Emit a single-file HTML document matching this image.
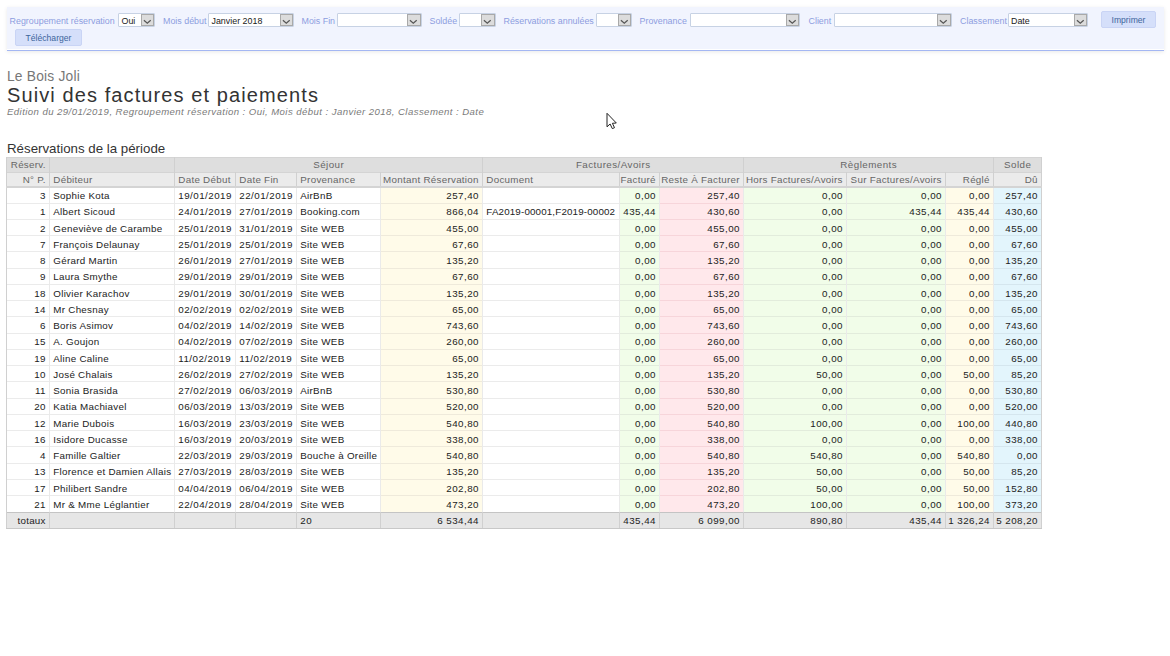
<!DOCTYPE html>
<html><head><meta charset="utf-8"><style>
*{margin:0;padding:0;box-sizing:border-box}
html,body{width:1170px;height:656px;overflow:hidden;background:#fff}
body{font-family:"Liberation Sans",sans-serif;position:relative}
.a{position:absolute}
.t{position:absolute;white-space:nowrap;line-height:1}
.hl{position:absolute;height:1px}
.vl{position:absolute;width:1px}

.panel{left:7px;top:7px;width:1157px;height:44px;background:#f1f4fe;border-bottom:1px solid #a4b7f3;box-shadow:inset 0 -1px 0 #fff,0 1px 4px rgba(0,0,0,.09)}
.lab{top:16.6px;font-size:8.9px;color:#8d9ddf;line-height:9px}
.sel{height:13.5px;background:#fff;border:1px solid #c7d2e4;border-radius:1px}
.st{position:absolute;left:2.5px;top:1.5px;font-size:8.9px;line-height:10px;color:#1a1a1a;white-space:nowrap}
.ab{position:absolute;right:0;top:0;width:13.3px;height:11.5px;background:#dcdcdc;border:1px solid #a9a9a9}
.ab svg{position:absolute;left:0;top:0}
.btn{background:#d5dffa;border:1px solid #c9d4f5;border-radius:2px;font-size:8.6px;line-height:17.4px;text-align:center;color:#3d659c;white-space:nowrap}
</style></head><body>
<div class="a panel"></div>
<div class="t lab" style="left:9.6px">Regroupement réservation</div>
<div class="a sel" style="left:118px;top:13px;width:37px"><span class="st">Oui</span><div class="ab"><svg width="12" height="10" viewBox="0 0 12 10"><path d="M1.9 5.3 L5.3 8.3 L8.7 5.3" fill="none" stroke="#555" stroke-width="1.15"/></svg></div></div>
<div class="t lab" style="left:163px">Mois début</div>
<div class="a sel" style="left:208px;top:13px;width:86px"><span class="st">Janvier 2018</span><div class="ab"><svg width="12" height="10" viewBox="0 0 12 10"><path d="M1.9 5.3 L5.3 8.3 L8.7 5.3" fill="none" stroke="#555" stroke-width="1.15"/></svg></div></div>
<div class="t lab" style="left:301.5px">Mois Fin</div>
<div class="a sel" style="left:336.5px;top:13px;width:85.0px"><span class="st"></span><div class="ab"><svg width="12" height="10" viewBox="0 0 12 10"><path d="M1.9 5.3 L5.3 8.3 L8.7 5.3" fill="none" stroke="#555" stroke-width="1.15"/></svg></div></div>
<div class="t lab" style="left:429.5px">Soldée</div>
<div class="a sel" style="left:459px;top:13px;width:36.5px"><span class="st"></span><div class="ab"><svg width="12" height="10" viewBox="0 0 12 10"><path d="M1.9 5.3 L5.3 8.3 L8.7 5.3" fill="none" stroke="#555" stroke-width="1.15"/></svg></div></div>
<div class="t lab" style="left:503.5px">Réservations annulées</div>
<div class="a sel" style="left:595.5px;top:13px;width:36.5px"><span class="st"></span><div class="ab"><svg width="12" height="10" viewBox="0 0 12 10"><path d="M1.9 5.3 L5.3 8.3 L8.7 5.3" fill="none" stroke="#555" stroke-width="1.15"/></svg></div></div>
<div class="t lab" style="left:639.5px">Provenance</div>
<div class="a sel" style="left:689.5px;top:13px;width:110.5px"><span class="st"></span><div class="ab"><svg width="12" height="10" viewBox="0 0 12 10"><path d="M1.9 5.3 L5.3 8.3 L8.7 5.3" fill="none" stroke="#555" stroke-width="1.15"/></svg></div></div>
<div class="t lab" style="left:808.5px">Client</div>
<div class="a sel" style="left:833.5px;top:13px;width:118.0px"><span class="st"></span><div class="ab"><svg width="12" height="10" viewBox="0 0 12 10"><path d="M1.9 5.3 L5.3 8.3 L8.7 5.3" fill="none" stroke="#555" stroke-width="1.15"/></svg></div></div>
<div class="t lab" style="left:960px">Classement</div>
<div class="a sel" style="left:1007.5px;top:13px;width:80.5px"><span class="st">Date</span><div class="ab"><svg width="12" height="10" viewBox="0 0 12 10"><path d="M1.9 5.3 L5.3 8.3 L8.7 5.3" fill="none" stroke="#555" stroke-width="1.15"/></svg></div></div>
<div class="a btn" style="left:1101px;top:11px;width:55px;height:16.5px">Imprimer</div>
<div class="a btn" style="left:15px;top:29px;width:67px;height:16.5px">Télécharger</div>
<div class="t" style="left:7px;top:69.5px;font-size:13.8px;letter-spacing:0.2px;color:#777">Le Bois Joli</div>
<div class="t" style="left:7px;top:85px;font-size:20px;letter-spacing:1.1px;color:#333">Suivi des factures et paiements</div>
<div class="t" style="left:7px;top:106.9px;font-size:9.6px;letter-spacing:0.43px;font-style:italic;color:#7a7a7a">Edition du 29/01/2019, Regroupement réservation : Oui, Mois début : Janvier 2018, Classement : Date</div>
<div class="t" style="left:7px;top:142.4px;font-size:13.3px;color:#333">Réservations de la période</div>
<svg class="a" style="left:605px;top:112px" width="14" height="18" viewBox="0 0 14 18"><path d="M2 1.3 L2 14.8 L5.1 12 L7.3 16.6 L9.5 15.7 L7.4 11.3 L11.3 11 Z" fill="#fff" stroke="#222" stroke-width="1" stroke-linejoin="round"/></svg>
<div class="a" style="left:6px;top:157px;width:1036px;height:15px;background:#dedede"></div>
<div class="a" style="left:6px;top:172px;width:1036px;height:14px;background:#ebebeb"></div>
<div class="a" style="left:381px;top:188px;width:101px;height:324px;background:#fffbe9"></div>
<div class="a" style="left:620px;top:188px;width:39px;height:324px;background:#f1fde9"></div>
<div class="a" style="left:660px;top:188px;width:83px;height:324px;background:#ffe8eb"></div>
<div class="a" style="left:744px;top:188px;width:102px;height:324px;background:#f1fde9"></div>
<div class="a" style="left:847px;top:188px;width:98px;height:324px;background:#f1fde9"></div>
<div class="a" style="left:946px;top:188px;width:47px;height:324px;background:#fffbe9"></div>
<div class="a" style="left:994px;top:188px;width:47px;height:324px;background:#e3f5fc"></div>
<div class="a" style="left:6px;top:512px;width:1036px;height:16px;background:#e6e6e6"></div>
<div class="hl" style="left:7px;top:202.55px;width:42px;background:#ebebeb"></div>
<div class="hl" style="left:50px;top:202.55px;width:124px;background:#ebebeb"></div>
<div class="hl" style="left:175px;top:202.55px;width:60px;background:#ebebeb"></div>
<div class="hl" style="left:236px;top:202.55px;width:60px;background:#ebebeb"></div>
<div class="hl" style="left:297px;top:202.55px;width:83px;background:#ebebeb"></div>
<div class="hl" style="left:381px;top:202.55px;width:101px;background:#efeadb"></div>
<div class="hl" style="left:483px;top:202.55px;width:136px;background:#ebebeb"></div>
<div class="hl" style="left:620px;top:202.55px;width:39px;background:#e2ecdc"></div>
<div class="hl" style="left:660px;top:202.55px;width:83px;background:#f7d5da"></div>
<div class="hl" style="left:744px;top:202.55px;width:102px;background:#e2ecdc"></div>
<div class="hl" style="left:847px;top:202.55px;width:98px;background:#e2ecdc"></div>
<div class="hl" style="left:946px;top:202.55px;width:47px;background:#efeadb"></div>
<div class="hl" style="left:994px;top:202.55px;width:47px;background:#d5e6ee"></div>
<div class="hl" style="left:7px;top:218.80px;width:42px;background:#ebebeb"></div>
<div class="hl" style="left:50px;top:218.80px;width:124px;background:#ebebeb"></div>
<div class="hl" style="left:175px;top:218.80px;width:60px;background:#ebebeb"></div>
<div class="hl" style="left:236px;top:218.80px;width:60px;background:#ebebeb"></div>
<div class="hl" style="left:297px;top:218.80px;width:83px;background:#ebebeb"></div>
<div class="hl" style="left:381px;top:218.80px;width:101px;background:#efeadb"></div>
<div class="hl" style="left:483px;top:218.80px;width:136px;background:#ebebeb"></div>
<div class="hl" style="left:620px;top:218.80px;width:39px;background:#e2ecdc"></div>
<div class="hl" style="left:660px;top:218.80px;width:83px;background:#f7d5da"></div>
<div class="hl" style="left:744px;top:218.80px;width:102px;background:#e2ecdc"></div>
<div class="hl" style="left:847px;top:218.80px;width:98px;background:#e2ecdc"></div>
<div class="hl" style="left:946px;top:218.80px;width:47px;background:#efeadb"></div>
<div class="hl" style="left:994px;top:218.80px;width:47px;background:#d5e6ee"></div>
<div class="hl" style="left:7px;top:235.05px;width:42px;background:#ebebeb"></div>
<div class="hl" style="left:50px;top:235.05px;width:124px;background:#ebebeb"></div>
<div class="hl" style="left:175px;top:235.05px;width:60px;background:#ebebeb"></div>
<div class="hl" style="left:236px;top:235.05px;width:60px;background:#ebebeb"></div>
<div class="hl" style="left:297px;top:235.05px;width:83px;background:#ebebeb"></div>
<div class="hl" style="left:381px;top:235.05px;width:101px;background:#efeadb"></div>
<div class="hl" style="left:483px;top:235.05px;width:136px;background:#ebebeb"></div>
<div class="hl" style="left:620px;top:235.05px;width:39px;background:#e2ecdc"></div>
<div class="hl" style="left:660px;top:235.05px;width:83px;background:#f7d5da"></div>
<div class="hl" style="left:744px;top:235.05px;width:102px;background:#e2ecdc"></div>
<div class="hl" style="left:847px;top:235.05px;width:98px;background:#e2ecdc"></div>
<div class="hl" style="left:946px;top:235.05px;width:47px;background:#efeadb"></div>
<div class="hl" style="left:994px;top:235.05px;width:47px;background:#d5e6ee"></div>
<div class="hl" style="left:7px;top:251.30px;width:42px;background:#ebebeb"></div>
<div class="hl" style="left:50px;top:251.30px;width:124px;background:#ebebeb"></div>
<div class="hl" style="left:175px;top:251.30px;width:60px;background:#ebebeb"></div>
<div class="hl" style="left:236px;top:251.30px;width:60px;background:#ebebeb"></div>
<div class="hl" style="left:297px;top:251.30px;width:83px;background:#ebebeb"></div>
<div class="hl" style="left:381px;top:251.30px;width:101px;background:#efeadb"></div>
<div class="hl" style="left:483px;top:251.30px;width:136px;background:#ebebeb"></div>
<div class="hl" style="left:620px;top:251.30px;width:39px;background:#e2ecdc"></div>
<div class="hl" style="left:660px;top:251.30px;width:83px;background:#f7d5da"></div>
<div class="hl" style="left:744px;top:251.30px;width:102px;background:#e2ecdc"></div>
<div class="hl" style="left:847px;top:251.30px;width:98px;background:#e2ecdc"></div>
<div class="hl" style="left:946px;top:251.30px;width:47px;background:#efeadb"></div>
<div class="hl" style="left:994px;top:251.30px;width:47px;background:#d5e6ee"></div>
<div class="hl" style="left:7px;top:267.55px;width:42px;background:#ebebeb"></div>
<div class="hl" style="left:50px;top:267.55px;width:124px;background:#ebebeb"></div>
<div class="hl" style="left:175px;top:267.55px;width:60px;background:#ebebeb"></div>
<div class="hl" style="left:236px;top:267.55px;width:60px;background:#ebebeb"></div>
<div class="hl" style="left:297px;top:267.55px;width:83px;background:#ebebeb"></div>
<div class="hl" style="left:381px;top:267.55px;width:101px;background:#efeadb"></div>
<div class="hl" style="left:483px;top:267.55px;width:136px;background:#ebebeb"></div>
<div class="hl" style="left:620px;top:267.55px;width:39px;background:#e2ecdc"></div>
<div class="hl" style="left:660px;top:267.55px;width:83px;background:#f7d5da"></div>
<div class="hl" style="left:744px;top:267.55px;width:102px;background:#e2ecdc"></div>
<div class="hl" style="left:847px;top:267.55px;width:98px;background:#e2ecdc"></div>
<div class="hl" style="left:946px;top:267.55px;width:47px;background:#efeadb"></div>
<div class="hl" style="left:994px;top:267.55px;width:47px;background:#d5e6ee"></div>
<div class="hl" style="left:7px;top:283.80px;width:42px;background:#ebebeb"></div>
<div class="hl" style="left:50px;top:283.80px;width:124px;background:#ebebeb"></div>
<div class="hl" style="left:175px;top:283.80px;width:60px;background:#ebebeb"></div>
<div class="hl" style="left:236px;top:283.80px;width:60px;background:#ebebeb"></div>
<div class="hl" style="left:297px;top:283.80px;width:83px;background:#ebebeb"></div>
<div class="hl" style="left:381px;top:283.80px;width:101px;background:#efeadb"></div>
<div class="hl" style="left:483px;top:283.80px;width:136px;background:#ebebeb"></div>
<div class="hl" style="left:620px;top:283.80px;width:39px;background:#e2ecdc"></div>
<div class="hl" style="left:660px;top:283.80px;width:83px;background:#f7d5da"></div>
<div class="hl" style="left:744px;top:283.80px;width:102px;background:#e2ecdc"></div>
<div class="hl" style="left:847px;top:283.80px;width:98px;background:#e2ecdc"></div>
<div class="hl" style="left:946px;top:283.80px;width:47px;background:#efeadb"></div>
<div class="hl" style="left:994px;top:283.80px;width:47px;background:#d5e6ee"></div>
<div class="hl" style="left:7px;top:300.05px;width:42px;background:#ebebeb"></div>
<div class="hl" style="left:50px;top:300.05px;width:124px;background:#ebebeb"></div>
<div class="hl" style="left:175px;top:300.05px;width:60px;background:#ebebeb"></div>
<div class="hl" style="left:236px;top:300.05px;width:60px;background:#ebebeb"></div>
<div class="hl" style="left:297px;top:300.05px;width:83px;background:#ebebeb"></div>
<div class="hl" style="left:381px;top:300.05px;width:101px;background:#efeadb"></div>
<div class="hl" style="left:483px;top:300.05px;width:136px;background:#ebebeb"></div>
<div class="hl" style="left:620px;top:300.05px;width:39px;background:#e2ecdc"></div>
<div class="hl" style="left:660px;top:300.05px;width:83px;background:#f7d5da"></div>
<div class="hl" style="left:744px;top:300.05px;width:102px;background:#e2ecdc"></div>
<div class="hl" style="left:847px;top:300.05px;width:98px;background:#e2ecdc"></div>
<div class="hl" style="left:946px;top:300.05px;width:47px;background:#efeadb"></div>
<div class="hl" style="left:994px;top:300.05px;width:47px;background:#d5e6ee"></div>
<div class="hl" style="left:7px;top:316.30px;width:42px;background:#ebebeb"></div>
<div class="hl" style="left:50px;top:316.30px;width:124px;background:#ebebeb"></div>
<div class="hl" style="left:175px;top:316.30px;width:60px;background:#ebebeb"></div>
<div class="hl" style="left:236px;top:316.30px;width:60px;background:#ebebeb"></div>
<div class="hl" style="left:297px;top:316.30px;width:83px;background:#ebebeb"></div>
<div class="hl" style="left:381px;top:316.30px;width:101px;background:#efeadb"></div>
<div class="hl" style="left:483px;top:316.30px;width:136px;background:#ebebeb"></div>
<div class="hl" style="left:620px;top:316.30px;width:39px;background:#e2ecdc"></div>
<div class="hl" style="left:660px;top:316.30px;width:83px;background:#f7d5da"></div>
<div class="hl" style="left:744px;top:316.30px;width:102px;background:#e2ecdc"></div>
<div class="hl" style="left:847px;top:316.30px;width:98px;background:#e2ecdc"></div>
<div class="hl" style="left:946px;top:316.30px;width:47px;background:#efeadb"></div>
<div class="hl" style="left:994px;top:316.30px;width:47px;background:#d5e6ee"></div>
<div class="hl" style="left:7px;top:332.55px;width:42px;background:#ebebeb"></div>
<div class="hl" style="left:50px;top:332.55px;width:124px;background:#ebebeb"></div>
<div class="hl" style="left:175px;top:332.55px;width:60px;background:#ebebeb"></div>
<div class="hl" style="left:236px;top:332.55px;width:60px;background:#ebebeb"></div>
<div class="hl" style="left:297px;top:332.55px;width:83px;background:#ebebeb"></div>
<div class="hl" style="left:381px;top:332.55px;width:101px;background:#efeadb"></div>
<div class="hl" style="left:483px;top:332.55px;width:136px;background:#ebebeb"></div>
<div class="hl" style="left:620px;top:332.55px;width:39px;background:#e2ecdc"></div>
<div class="hl" style="left:660px;top:332.55px;width:83px;background:#f7d5da"></div>
<div class="hl" style="left:744px;top:332.55px;width:102px;background:#e2ecdc"></div>
<div class="hl" style="left:847px;top:332.55px;width:98px;background:#e2ecdc"></div>
<div class="hl" style="left:946px;top:332.55px;width:47px;background:#efeadb"></div>
<div class="hl" style="left:994px;top:332.55px;width:47px;background:#d5e6ee"></div>
<div class="hl" style="left:7px;top:348.80px;width:42px;background:#ebebeb"></div>
<div class="hl" style="left:50px;top:348.80px;width:124px;background:#ebebeb"></div>
<div class="hl" style="left:175px;top:348.80px;width:60px;background:#ebebeb"></div>
<div class="hl" style="left:236px;top:348.80px;width:60px;background:#ebebeb"></div>
<div class="hl" style="left:297px;top:348.80px;width:83px;background:#ebebeb"></div>
<div class="hl" style="left:381px;top:348.80px;width:101px;background:#efeadb"></div>
<div class="hl" style="left:483px;top:348.80px;width:136px;background:#ebebeb"></div>
<div class="hl" style="left:620px;top:348.80px;width:39px;background:#e2ecdc"></div>
<div class="hl" style="left:660px;top:348.80px;width:83px;background:#f7d5da"></div>
<div class="hl" style="left:744px;top:348.80px;width:102px;background:#e2ecdc"></div>
<div class="hl" style="left:847px;top:348.80px;width:98px;background:#e2ecdc"></div>
<div class="hl" style="left:946px;top:348.80px;width:47px;background:#efeadb"></div>
<div class="hl" style="left:994px;top:348.80px;width:47px;background:#d5e6ee"></div>
<div class="hl" style="left:7px;top:365.05px;width:42px;background:#ebebeb"></div>
<div class="hl" style="left:50px;top:365.05px;width:124px;background:#ebebeb"></div>
<div class="hl" style="left:175px;top:365.05px;width:60px;background:#ebebeb"></div>
<div class="hl" style="left:236px;top:365.05px;width:60px;background:#ebebeb"></div>
<div class="hl" style="left:297px;top:365.05px;width:83px;background:#ebebeb"></div>
<div class="hl" style="left:381px;top:365.05px;width:101px;background:#efeadb"></div>
<div class="hl" style="left:483px;top:365.05px;width:136px;background:#ebebeb"></div>
<div class="hl" style="left:620px;top:365.05px;width:39px;background:#e2ecdc"></div>
<div class="hl" style="left:660px;top:365.05px;width:83px;background:#f7d5da"></div>
<div class="hl" style="left:744px;top:365.05px;width:102px;background:#e2ecdc"></div>
<div class="hl" style="left:847px;top:365.05px;width:98px;background:#e2ecdc"></div>
<div class="hl" style="left:946px;top:365.05px;width:47px;background:#efeadb"></div>
<div class="hl" style="left:994px;top:365.05px;width:47px;background:#d5e6ee"></div>
<div class="hl" style="left:7px;top:381.30px;width:42px;background:#ebebeb"></div>
<div class="hl" style="left:50px;top:381.30px;width:124px;background:#ebebeb"></div>
<div class="hl" style="left:175px;top:381.30px;width:60px;background:#ebebeb"></div>
<div class="hl" style="left:236px;top:381.30px;width:60px;background:#ebebeb"></div>
<div class="hl" style="left:297px;top:381.30px;width:83px;background:#ebebeb"></div>
<div class="hl" style="left:381px;top:381.30px;width:101px;background:#efeadb"></div>
<div class="hl" style="left:483px;top:381.30px;width:136px;background:#ebebeb"></div>
<div class="hl" style="left:620px;top:381.30px;width:39px;background:#e2ecdc"></div>
<div class="hl" style="left:660px;top:381.30px;width:83px;background:#f7d5da"></div>
<div class="hl" style="left:744px;top:381.30px;width:102px;background:#e2ecdc"></div>
<div class="hl" style="left:847px;top:381.30px;width:98px;background:#e2ecdc"></div>
<div class="hl" style="left:946px;top:381.30px;width:47px;background:#efeadb"></div>
<div class="hl" style="left:994px;top:381.30px;width:47px;background:#d5e6ee"></div>
<div class="hl" style="left:7px;top:397.55px;width:42px;background:#ebebeb"></div>
<div class="hl" style="left:50px;top:397.55px;width:124px;background:#ebebeb"></div>
<div class="hl" style="left:175px;top:397.55px;width:60px;background:#ebebeb"></div>
<div class="hl" style="left:236px;top:397.55px;width:60px;background:#ebebeb"></div>
<div class="hl" style="left:297px;top:397.55px;width:83px;background:#ebebeb"></div>
<div class="hl" style="left:381px;top:397.55px;width:101px;background:#efeadb"></div>
<div class="hl" style="left:483px;top:397.55px;width:136px;background:#ebebeb"></div>
<div class="hl" style="left:620px;top:397.55px;width:39px;background:#e2ecdc"></div>
<div class="hl" style="left:660px;top:397.55px;width:83px;background:#f7d5da"></div>
<div class="hl" style="left:744px;top:397.55px;width:102px;background:#e2ecdc"></div>
<div class="hl" style="left:847px;top:397.55px;width:98px;background:#e2ecdc"></div>
<div class="hl" style="left:946px;top:397.55px;width:47px;background:#efeadb"></div>
<div class="hl" style="left:994px;top:397.55px;width:47px;background:#d5e6ee"></div>
<div class="hl" style="left:7px;top:413.80px;width:42px;background:#ebebeb"></div>
<div class="hl" style="left:50px;top:413.80px;width:124px;background:#ebebeb"></div>
<div class="hl" style="left:175px;top:413.80px;width:60px;background:#ebebeb"></div>
<div class="hl" style="left:236px;top:413.80px;width:60px;background:#ebebeb"></div>
<div class="hl" style="left:297px;top:413.80px;width:83px;background:#ebebeb"></div>
<div class="hl" style="left:381px;top:413.80px;width:101px;background:#efeadb"></div>
<div class="hl" style="left:483px;top:413.80px;width:136px;background:#ebebeb"></div>
<div class="hl" style="left:620px;top:413.80px;width:39px;background:#e2ecdc"></div>
<div class="hl" style="left:660px;top:413.80px;width:83px;background:#f7d5da"></div>
<div class="hl" style="left:744px;top:413.80px;width:102px;background:#e2ecdc"></div>
<div class="hl" style="left:847px;top:413.80px;width:98px;background:#e2ecdc"></div>
<div class="hl" style="left:946px;top:413.80px;width:47px;background:#efeadb"></div>
<div class="hl" style="left:994px;top:413.80px;width:47px;background:#d5e6ee"></div>
<div class="hl" style="left:7px;top:430.05px;width:42px;background:#ebebeb"></div>
<div class="hl" style="left:50px;top:430.05px;width:124px;background:#ebebeb"></div>
<div class="hl" style="left:175px;top:430.05px;width:60px;background:#ebebeb"></div>
<div class="hl" style="left:236px;top:430.05px;width:60px;background:#ebebeb"></div>
<div class="hl" style="left:297px;top:430.05px;width:83px;background:#ebebeb"></div>
<div class="hl" style="left:381px;top:430.05px;width:101px;background:#efeadb"></div>
<div class="hl" style="left:483px;top:430.05px;width:136px;background:#ebebeb"></div>
<div class="hl" style="left:620px;top:430.05px;width:39px;background:#e2ecdc"></div>
<div class="hl" style="left:660px;top:430.05px;width:83px;background:#f7d5da"></div>
<div class="hl" style="left:744px;top:430.05px;width:102px;background:#e2ecdc"></div>
<div class="hl" style="left:847px;top:430.05px;width:98px;background:#e2ecdc"></div>
<div class="hl" style="left:946px;top:430.05px;width:47px;background:#efeadb"></div>
<div class="hl" style="left:994px;top:430.05px;width:47px;background:#d5e6ee"></div>
<div class="hl" style="left:7px;top:446.30px;width:42px;background:#ebebeb"></div>
<div class="hl" style="left:50px;top:446.30px;width:124px;background:#ebebeb"></div>
<div class="hl" style="left:175px;top:446.30px;width:60px;background:#ebebeb"></div>
<div class="hl" style="left:236px;top:446.30px;width:60px;background:#ebebeb"></div>
<div class="hl" style="left:297px;top:446.30px;width:83px;background:#ebebeb"></div>
<div class="hl" style="left:381px;top:446.30px;width:101px;background:#efeadb"></div>
<div class="hl" style="left:483px;top:446.30px;width:136px;background:#ebebeb"></div>
<div class="hl" style="left:620px;top:446.30px;width:39px;background:#e2ecdc"></div>
<div class="hl" style="left:660px;top:446.30px;width:83px;background:#f7d5da"></div>
<div class="hl" style="left:744px;top:446.30px;width:102px;background:#e2ecdc"></div>
<div class="hl" style="left:847px;top:446.30px;width:98px;background:#e2ecdc"></div>
<div class="hl" style="left:946px;top:446.30px;width:47px;background:#efeadb"></div>
<div class="hl" style="left:994px;top:446.30px;width:47px;background:#d5e6ee"></div>
<div class="hl" style="left:7px;top:462.55px;width:42px;background:#ebebeb"></div>
<div class="hl" style="left:50px;top:462.55px;width:124px;background:#ebebeb"></div>
<div class="hl" style="left:175px;top:462.55px;width:60px;background:#ebebeb"></div>
<div class="hl" style="left:236px;top:462.55px;width:60px;background:#ebebeb"></div>
<div class="hl" style="left:297px;top:462.55px;width:83px;background:#ebebeb"></div>
<div class="hl" style="left:381px;top:462.55px;width:101px;background:#efeadb"></div>
<div class="hl" style="left:483px;top:462.55px;width:136px;background:#ebebeb"></div>
<div class="hl" style="left:620px;top:462.55px;width:39px;background:#e2ecdc"></div>
<div class="hl" style="left:660px;top:462.55px;width:83px;background:#f7d5da"></div>
<div class="hl" style="left:744px;top:462.55px;width:102px;background:#e2ecdc"></div>
<div class="hl" style="left:847px;top:462.55px;width:98px;background:#e2ecdc"></div>
<div class="hl" style="left:946px;top:462.55px;width:47px;background:#efeadb"></div>
<div class="hl" style="left:994px;top:462.55px;width:47px;background:#d5e6ee"></div>
<div class="hl" style="left:7px;top:478.80px;width:42px;background:#ebebeb"></div>
<div class="hl" style="left:50px;top:478.80px;width:124px;background:#ebebeb"></div>
<div class="hl" style="left:175px;top:478.80px;width:60px;background:#ebebeb"></div>
<div class="hl" style="left:236px;top:478.80px;width:60px;background:#ebebeb"></div>
<div class="hl" style="left:297px;top:478.80px;width:83px;background:#ebebeb"></div>
<div class="hl" style="left:381px;top:478.80px;width:101px;background:#efeadb"></div>
<div class="hl" style="left:483px;top:478.80px;width:136px;background:#ebebeb"></div>
<div class="hl" style="left:620px;top:478.80px;width:39px;background:#e2ecdc"></div>
<div class="hl" style="left:660px;top:478.80px;width:83px;background:#f7d5da"></div>
<div class="hl" style="left:744px;top:478.80px;width:102px;background:#e2ecdc"></div>
<div class="hl" style="left:847px;top:478.80px;width:98px;background:#e2ecdc"></div>
<div class="hl" style="left:946px;top:478.80px;width:47px;background:#efeadb"></div>
<div class="hl" style="left:994px;top:478.80px;width:47px;background:#d5e6ee"></div>
<div class="hl" style="left:7px;top:495.05px;width:42px;background:#ebebeb"></div>
<div class="hl" style="left:50px;top:495.05px;width:124px;background:#ebebeb"></div>
<div class="hl" style="left:175px;top:495.05px;width:60px;background:#ebebeb"></div>
<div class="hl" style="left:236px;top:495.05px;width:60px;background:#ebebeb"></div>
<div class="hl" style="left:297px;top:495.05px;width:83px;background:#ebebeb"></div>
<div class="hl" style="left:381px;top:495.05px;width:101px;background:#efeadb"></div>
<div class="hl" style="left:483px;top:495.05px;width:136px;background:#ebebeb"></div>
<div class="hl" style="left:620px;top:495.05px;width:39px;background:#e2ecdc"></div>
<div class="hl" style="left:660px;top:495.05px;width:83px;background:#f7d5da"></div>
<div class="hl" style="left:744px;top:495.05px;width:102px;background:#e2ecdc"></div>
<div class="hl" style="left:847px;top:495.05px;width:98px;background:#e2ecdc"></div>
<div class="hl" style="left:946px;top:495.05px;width:47px;background:#efeadb"></div>
<div class="hl" style="left:994px;top:495.05px;width:47px;background:#d5e6ee"></div>
<div class="hl" style="left:6px;top:157px;width:1036px;background:#d4d4d4"></div>
<div class="hl" style="left:6px;top:172px;width:1036px;background:#d4d4d4"></div>
<div class="a" style="left:6px;top:186px;width:1036px;height:2px;background:#d4d4d4"></div>
<div class="hl" style="left:6px;top:512px;width:1036px;background:#c4c4c4"></div>
<div class="hl" style="left:6px;top:528px;width:1036px;background:#c8c8c8"></div>
<div class="vl" style="left:6px;top:157px;height:15px;background:#d0d0d0"></div>
<div class="vl" style="left:6px;top:172px;height:14px;background:#d0d0d0"></div>
<div class="vl" style="left:6px;top:188px;height:324px;background:#d0d0d0"></div>
<div class="vl" style="left:6px;top:512px;height:16px;background:#d0d0d0"></div>
<div class="vl" style="left:49px;top:157px;height:15px;background:#d0d0d0"></div>
<div class="vl" style="left:49px;top:172px;height:14px;background:#d0d0d0"></div>
<div class="vl" style="left:49px;top:188px;height:324px;background:#eaeaea"></div>
<div class="vl" style="left:49px;top:512px;height:16px;background:#d0d0d0"></div>
<div class="vl" style="left:174px;top:157px;height:15px;background:#d0d0d0"></div>
<div class="vl" style="left:174px;top:172px;height:14px;background:#d0d0d0"></div>
<div class="vl" style="left:174px;top:188px;height:324px;background:#eaeaea"></div>
<div class="vl" style="left:174px;top:512px;height:16px;background:#d0d0d0"></div>
<div class="vl" style="left:235px;top:172px;height:14px;background:#d0d0d0"></div>
<div class="vl" style="left:235px;top:188px;height:324px;background:#eaeaea"></div>
<div class="vl" style="left:235px;top:512px;height:16px;background:#d0d0d0"></div>
<div class="vl" style="left:296px;top:172px;height:14px;background:#d0d0d0"></div>
<div class="vl" style="left:296px;top:188px;height:324px;background:#eaeaea"></div>
<div class="vl" style="left:296px;top:512px;height:16px;background:#d0d0d0"></div>
<div class="vl" style="left:380px;top:172px;height:14px;background:#d0d0d0"></div>
<div class="vl" style="left:380px;top:188px;height:324px;background:#eaeaea"></div>
<div class="vl" style="left:380px;top:512px;height:16px;background:#d0d0d0"></div>
<div class="vl" style="left:482px;top:157px;height:15px;background:#d0d0d0"></div>
<div class="vl" style="left:482px;top:172px;height:14px;background:#d0d0d0"></div>
<div class="vl" style="left:482px;top:188px;height:324px;background:#eaeaea"></div>
<div class="vl" style="left:482px;top:512px;height:16px;background:#d0d0d0"></div>
<div class="vl" style="left:619px;top:172px;height:14px;background:#d0d0d0"></div>
<div class="vl" style="left:619px;top:188px;height:324px;background:#eaeaea"></div>
<div class="vl" style="left:619px;top:512px;height:16px;background:#d0d0d0"></div>
<div class="vl" style="left:659px;top:172px;height:14px;background:#d0d0d0"></div>
<div class="vl" style="left:659px;top:188px;height:324px;background:#eaeaea"></div>
<div class="vl" style="left:659px;top:512px;height:16px;background:#d0d0d0"></div>
<div class="vl" style="left:743px;top:157px;height:15px;background:#d0d0d0"></div>
<div class="vl" style="left:743px;top:172px;height:14px;background:#d0d0d0"></div>
<div class="vl" style="left:743px;top:188px;height:324px;background:#eaeaea"></div>
<div class="vl" style="left:743px;top:512px;height:16px;background:#d0d0d0"></div>
<div class="vl" style="left:846px;top:172px;height:14px;background:#d0d0d0"></div>
<div class="vl" style="left:846px;top:188px;height:324px;background:#eaeaea"></div>
<div class="vl" style="left:846px;top:512px;height:16px;background:#d0d0d0"></div>
<div class="vl" style="left:945px;top:172px;height:14px;background:#d0d0d0"></div>
<div class="vl" style="left:945px;top:188px;height:324px;background:#eaeaea"></div>
<div class="vl" style="left:945px;top:512px;height:16px;background:#d0d0d0"></div>
<div class="vl" style="left:993px;top:157px;height:15px;background:#d0d0d0"></div>
<div class="vl" style="left:993px;top:172px;height:14px;background:#d0d0d0"></div>
<div class="vl" style="left:993px;top:188px;height:324px;background:#eaeaea"></div>
<div class="vl" style="left:993px;top:512px;height:16px;background:#d0d0d0"></div>
<div class="vl" style="left:1041px;top:157px;height:15px;background:#d0d0d0"></div>
<div class="vl" style="left:1041px;top:172px;height:14px;background:#d0d0d0"></div>
<div class="vl" style="left:1041px;top:188px;height:324px;background:#d0d0d0"></div>
<div class="vl" style="left:1041px;top:512px;height:16px;background:#d0d0d0"></div>
<div class="t" style="right:1124.22px;top:158.40px;height:14px;line-height:14px;font-size:9.8px;letter-spacing:0.28px;color:#666">Réserv.</div>
<div class="t" style="left:175.225px;width:307px;text-align:center;top:158.4px;height:14px;line-height:14px;font-size:9.8px;letter-spacing:0.45px;color:#666">Séjour</div>
<div class="t" style="left:483.225px;width:260px;text-align:center;top:158.4px;height:14px;line-height:14px;font-size:9.8px;letter-spacing:0.45px;color:#666">Factures/Avoirs</div>
<div class="t" style="left:744.225px;width:249px;text-align:center;top:158.4px;height:14px;line-height:14px;font-size:9.8px;letter-spacing:0.45px;color:#666">Règlements</div>
<div class="t" style="left:994.225px;width:47px;text-align:center;top:158.4px;height:14px;line-height:14px;font-size:9.8px;letter-spacing:0.45px;color:#666">Solde</div>
<div class="t" style="right:1124.22px;top:173.40px;height:13px;line-height:13px;font-size:9.8px;letter-spacing:0.28px;color:#666">N° P.</div>
<div class="t" style="left:53.3px;top:173.40px;height:13px;line-height:13px;font-size:9.8px;letter-spacing:0.28px;color:#666">Débiteur</div>
<div class="t" style="left:178.3px;top:173.40px;height:13px;line-height:13px;font-size:9.8px;letter-spacing:0.28px;color:#666">Date Début</div>
<div class="t" style="left:239.3px;top:173.40px;height:13px;line-height:13px;font-size:9.8px;letter-spacing:0.28px;color:#666">Date Fin</div>
<div class="t" style="left:300.3px;top:173.40px;height:13px;line-height:13px;font-size:9.8px;letter-spacing:0.28px;color:#666">Provenance</div>
<div class="t" style="right:691.22px;top:173.40px;height:13px;line-height:13px;font-size:9.8px;letter-spacing:0.28px;color:#666">Montant Réservation</div>
<div class="t" style="left:486.3px;top:173.40px;height:13px;line-height:13px;font-size:9.8px;letter-spacing:0.28px;color:#666">Document</div>
<div class="t" style="right:514.22px;top:173.40px;height:13px;line-height:13px;font-size:9.8px;letter-spacing:0.28px;color:#666">Facturé</div>
<div class="t" style="right:430.22px;top:173.40px;height:13px;line-height:13px;font-size:9.8px;letter-spacing:0.28px;color:#666">Reste À Facturer</div>
<div class="t" style="right:327.22px;top:173.40px;height:13px;line-height:13px;font-size:9.8px;letter-spacing:0.28px;color:#666">Hors Factures/Avoirs</div>
<div class="t" style="right:228.22px;top:173.40px;height:13px;line-height:13px;font-size:9.8px;letter-spacing:0.28px;color:#666">Sur Factures/Avoirs</div>
<div class="t" style="right:180.22px;top:173.40px;height:13px;line-height:13px;font-size:9.8px;letter-spacing:0.28px;color:#666">Réglé</div>
<div class="t" style="right:132.22px;top:173.40px;height:13px;line-height:13px;font-size:9.8px;letter-spacing:0.28px;color:#666">Dû</div>
<div class="t" style="right:1124.05px;top:188.10px;height:15.25px;line-height:15.25px;font-size:9.8px;letter-spacing:0.45px;color:#222">3</div>
<div class="t" style="left:53.3px;top:188.10px;height:15.25px;line-height:15.25px;font-size:9.8px;letter-spacing:0.28px;color:#222">Sophie Kota</div>
<div class="t" style="left:178.3px;top:188.10px;height:15.25px;line-height:15.25px;font-size:9.8px;letter-spacing:0.45px;color:#222">19/01/2019</div>
<div class="t" style="left:239.3px;top:188.10px;height:15.25px;line-height:15.25px;font-size:9.8px;letter-spacing:0.45px;color:#222">22/01/2019</div>
<div class="t" style="left:300.3px;top:188.10px;height:15.25px;line-height:15.25px;font-size:9.8px;letter-spacing:0.28px;color:#222">AirBnB</div>
<div class="t" style="right:691.05px;top:188.10px;height:15.25px;line-height:15.25px;font-size:9.8px;letter-spacing:0.45px;color:#222">257,40</div>
<div class="t" style="right:514.05px;top:188.10px;height:15.25px;line-height:15.25px;font-size:9.8px;letter-spacing:0.45px;color:#222">0,00</div>
<div class="t" style="right:430.05px;top:188.10px;height:15.25px;line-height:15.25px;font-size:9.8px;letter-spacing:0.45px;color:#222">257,40</div>
<div class="t" style="right:327.05px;top:188.10px;height:15.25px;line-height:15.25px;font-size:9.8px;letter-spacing:0.45px;color:#222">0,00</div>
<div class="t" style="right:228.05px;top:188.10px;height:15.25px;line-height:15.25px;font-size:9.8px;letter-spacing:0.45px;color:#222">0,00</div>
<div class="t" style="right:180.05px;top:188.10px;height:15.25px;line-height:15.25px;font-size:9.8px;letter-spacing:0.45px;color:#222">0,00</div>
<div class="t" style="right:132.05px;top:188.10px;height:15.25px;line-height:15.25px;font-size:9.8px;letter-spacing:0.45px;color:#222">257,40</div>
<div class="t" style="right:1124.05px;top:204.35px;height:15.25px;line-height:15.25px;font-size:9.8px;letter-spacing:0.45px;color:#222">1</div>
<div class="t" style="left:53.3px;top:204.35px;height:15.25px;line-height:15.25px;font-size:9.8px;letter-spacing:0.28px;color:#222">Albert Sicoud</div>
<div class="t" style="left:178.3px;top:204.35px;height:15.25px;line-height:15.25px;font-size:9.8px;letter-spacing:0.45px;color:#222">24/01/2019</div>
<div class="t" style="left:239.3px;top:204.35px;height:15.25px;line-height:15.25px;font-size:9.8px;letter-spacing:0.45px;color:#222">27/01/2019</div>
<div class="t" style="left:300.3px;top:204.35px;height:15.25px;line-height:15.25px;font-size:9.8px;letter-spacing:0.28px;color:#222">Booking.com</div>
<div class="t" style="right:691.05px;top:204.35px;height:15.25px;line-height:15.25px;font-size:9.8px;letter-spacing:0.45px;color:#222">866,04</div>
<div class="t" style="left:486.3px;top:204.35px;height:15.25px;line-height:15.25px;font-size:9.8px;letter-spacing:0.15px;color:#222">FA2019-00001,F2019-00002</div>
<div class="t" style="right:514.05px;top:204.35px;height:15.25px;line-height:15.25px;font-size:9.8px;letter-spacing:0.45px;color:#222">435,44</div>
<div class="t" style="right:430.05px;top:204.35px;height:15.25px;line-height:15.25px;font-size:9.8px;letter-spacing:0.45px;color:#222">430,60</div>
<div class="t" style="right:327.05px;top:204.35px;height:15.25px;line-height:15.25px;font-size:9.8px;letter-spacing:0.45px;color:#222">0,00</div>
<div class="t" style="right:228.05px;top:204.35px;height:15.25px;line-height:15.25px;font-size:9.8px;letter-spacing:0.45px;color:#222">435,44</div>
<div class="t" style="right:180.05px;top:204.35px;height:15.25px;line-height:15.25px;font-size:9.8px;letter-spacing:0.45px;color:#222">435,44</div>
<div class="t" style="right:132.05px;top:204.35px;height:15.25px;line-height:15.25px;font-size:9.8px;letter-spacing:0.45px;color:#222">430,60</div>
<div class="t" style="right:1124.05px;top:220.60px;height:15.25px;line-height:15.25px;font-size:9.8px;letter-spacing:0.45px;color:#222">2</div>
<div class="t" style="left:53.3px;top:220.60px;height:15.25px;line-height:15.25px;font-size:9.8px;letter-spacing:0.28px;color:#222">Geneviève de Carambe</div>
<div class="t" style="left:178.3px;top:220.60px;height:15.25px;line-height:15.25px;font-size:9.8px;letter-spacing:0.45px;color:#222">25/01/2019</div>
<div class="t" style="left:239.3px;top:220.60px;height:15.25px;line-height:15.25px;font-size:9.8px;letter-spacing:0.45px;color:#222">31/01/2019</div>
<div class="t" style="left:300.3px;top:220.60px;height:15.25px;line-height:15.25px;font-size:9.8px;letter-spacing:0.28px;color:#222">Site WEB</div>
<div class="t" style="right:691.05px;top:220.60px;height:15.25px;line-height:15.25px;font-size:9.8px;letter-spacing:0.45px;color:#222">455,00</div>
<div class="t" style="right:514.05px;top:220.60px;height:15.25px;line-height:15.25px;font-size:9.8px;letter-spacing:0.45px;color:#222">0,00</div>
<div class="t" style="right:430.05px;top:220.60px;height:15.25px;line-height:15.25px;font-size:9.8px;letter-spacing:0.45px;color:#222">455,00</div>
<div class="t" style="right:327.05px;top:220.60px;height:15.25px;line-height:15.25px;font-size:9.8px;letter-spacing:0.45px;color:#222">0,00</div>
<div class="t" style="right:228.05px;top:220.60px;height:15.25px;line-height:15.25px;font-size:9.8px;letter-spacing:0.45px;color:#222">0,00</div>
<div class="t" style="right:180.05px;top:220.60px;height:15.25px;line-height:15.25px;font-size:9.8px;letter-spacing:0.45px;color:#222">0,00</div>
<div class="t" style="right:132.05px;top:220.60px;height:15.25px;line-height:15.25px;font-size:9.8px;letter-spacing:0.45px;color:#222">455,00</div>
<div class="t" style="right:1124.05px;top:236.85px;height:15.25px;line-height:15.25px;font-size:9.8px;letter-spacing:0.45px;color:#222">7</div>
<div class="t" style="left:53.3px;top:236.85px;height:15.25px;line-height:15.25px;font-size:9.8px;letter-spacing:0.28px;color:#222">François Delaunay</div>
<div class="t" style="left:178.3px;top:236.85px;height:15.25px;line-height:15.25px;font-size:9.8px;letter-spacing:0.45px;color:#222">25/01/2019</div>
<div class="t" style="left:239.3px;top:236.85px;height:15.25px;line-height:15.25px;font-size:9.8px;letter-spacing:0.45px;color:#222">25/01/2019</div>
<div class="t" style="left:300.3px;top:236.85px;height:15.25px;line-height:15.25px;font-size:9.8px;letter-spacing:0.28px;color:#222">Site WEB</div>
<div class="t" style="right:691.05px;top:236.85px;height:15.25px;line-height:15.25px;font-size:9.8px;letter-spacing:0.45px;color:#222">67,60</div>
<div class="t" style="right:514.05px;top:236.85px;height:15.25px;line-height:15.25px;font-size:9.8px;letter-spacing:0.45px;color:#222">0,00</div>
<div class="t" style="right:430.05px;top:236.85px;height:15.25px;line-height:15.25px;font-size:9.8px;letter-spacing:0.45px;color:#222">67,60</div>
<div class="t" style="right:327.05px;top:236.85px;height:15.25px;line-height:15.25px;font-size:9.8px;letter-spacing:0.45px;color:#222">0,00</div>
<div class="t" style="right:228.05px;top:236.85px;height:15.25px;line-height:15.25px;font-size:9.8px;letter-spacing:0.45px;color:#222">0,00</div>
<div class="t" style="right:180.05px;top:236.85px;height:15.25px;line-height:15.25px;font-size:9.8px;letter-spacing:0.45px;color:#222">0,00</div>
<div class="t" style="right:132.05px;top:236.85px;height:15.25px;line-height:15.25px;font-size:9.8px;letter-spacing:0.45px;color:#222">67,60</div>
<div class="t" style="right:1124.05px;top:253.10px;height:15.25px;line-height:15.25px;font-size:9.8px;letter-spacing:0.45px;color:#222">8</div>
<div class="t" style="left:53.3px;top:253.10px;height:15.25px;line-height:15.25px;font-size:9.8px;letter-spacing:0.28px;color:#222">Gérard Martin</div>
<div class="t" style="left:178.3px;top:253.10px;height:15.25px;line-height:15.25px;font-size:9.8px;letter-spacing:0.45px;color:#222">26/01/2019</div>
<div class="t" style="left:239.3px;top:253.10px;height:15.25px;line-height:15.25px;font-size:9.8px;letter-spacing:0.45px;color:#222">27/01/2019</div>
<div class="t" style="left:300.3px;top:253.10px;height:15.25px;line-height:15.25px;font-size:9.8px;letter-spacing:0.28px;color:#222">Site WEB</div>
<div class="t" style="right:691.05px;top:253.10px;height:15.25px;line-height:15.25px;font-size:9.8px;letter-spacing:0.45px;color:#222">135,20</div>
<div class="t" style="right:514.05px;top:253.10px;height:15.25px;line-height:15.25px;font-size:9.8px;letter-spacing:0.45px;color:#222">0,00</div>
<div class="t" style="right:430.05px;top:253.10px;height:15.25px;line-height:15.25px;font-size:9.8px;letter-spacing:0.45px;color:#222">135,20</div>
<div class="t" style="right:327.05px;top:253.10px;height:15.25px;line-height:15.25px;font-size:9.8px;letter-spacing:0.45px;color:#222">0,00</div>
<div class="t" style="right:228.05px;top:253.10px;height:15.25px;line-height:15.25px;font-size:9.8px;letter-spacing:0.45px;color:#222">0,00</div>
<div class="t" style="right:180.05px;top:253.10px;height:15.25px;line-height:15.25px;font-size:9.8px;letter-spacing:0.45px;color:#222">0,00</div>
<div class="t" style="right:132.05px;top:253.10px;height:15.25px;line-height:15.25px;font-size:9.8px;letter-spacing:0.45px;color:#222">135,20</div>
<div class="t" style="right:1124.05px;top:269.35px;height:15.25px;line-height:15.25px;font-size:9.8px;letter-spacing:0.45px;color:#222">9</div>
<div class="t" style="left:53.3px;top:269.35px;height:15.25px;line-height:15.25px;font-size:9.8px;letter-spacing:0.28px;color:#222">Laura Smythe</div>
<div class="t" style="left:178.3px;top:269.35px;height:15.25px;line-height:15.25px;font-size:9.8px;letter-spacing:0.45px;color:#222">29/01/2019</div>
<div class="t" style="left:239.3px;top:269.35px;height:15.25px;line-height:15.25px;font-size:9.8px;letter-spacing:0.45px;color:#222">29/01/2019</div>
<div class="t" style="left:300.3px;top:269.35px;height:15.25px;line-height:15.25px;font-size:9.8px;letter-spacing:0.28px;color:#222">Site WEB</div>
<div class="t" style="right:691.05px;top:269.35px;height:15.25px;line-height:15.25px;font-size:9.8px;letter-spacing:0.45px;color:#222">67,60</div>
<div class="t" style="right:514.05px;top:269.35px;height:15.25px;line-height:15.25px;font-size:9.8px;letter-spacing:0.45px;color:#222">0,00</div>
<div class="t" style="right:430.05px;top:269.35px;height:15.25px;line-height:15.25px;font-size:9.8px;letter-spacing:0.45px;color:#222">67,60</div>
<div class="t" style="right:327.05px;top:269.35px;height:15.25px;line-height:15.25px;font-size:9.8px;letter-spacing:0.45px;color:#222">0,00</div>
<div class="t" style="right:228.05px;top:269.35px;height:15.25px;line-height:15.25px;font-size:9.8px;letter-spacing:0.45px;color:#222">0,00</div>
<div class="t" style="right:180.05px;top:269.35px;height:15.25px;line-height:15.25px;font-size:9.8px;letter-spacing:0.45px;color:#222">0,00</div>
<div class="t" style="right:132.05px;top:269.35px;height:15.25px;line-height:15.25px;font-size:9.8px;letter-spacing:0.45px;color:#222">67,60</div>
<div class="t" style="right:1124.05px;top:285.60px;height:15.25px;line-height:15.25px;font-size:9.8px;letter-spacing:0.45px;color:#222">18</div>
<div class="t" style="left:53.3px;top:285.60px;height:15.25px;line-height:15.25px;font-size:9.8px;letter-spacing:0.28px;color:#222">Olivier Karachov</div>
<div class="t" style="left:178.3px;top:285.60px;height:15.25px;line-height:15.25px;font-size:9.8px;letter-spacing:0.45px;color:#222">29/01/2019</div>
<div class="t" style="left:239.3px;top:285.60px;height:15.25px;line-height:15.25px;font-size:9.8px;letter-spacing:0.45px;color:#222">30/01/2019</div>
<div class="t" style="left:300.3px;top:285.60px;height:15.25px;line-height:15.25px;font-size:9.8px;letter-spacing:0.28px;color:#222">Site WEB</div>
<div class="t" style="right:691.05px;top:285.60px;height:15.25px;line-height:15.25px;font-size:9.8px;letter-spacing:0.45px;color:#222">135,20</div>
<div class="t" style="right:514.05px;top:285.60px;height:15.25px;line-height:15.25px;font-size:9.8px;letter-spacing:0.45px;color:#222">0,00</div>
<div class="t" style="right:430.05px;top:285.60px;height:15.25px;line-height:15.25px;font-size:9.8px;letter-spacing:0.45px;color:#222">135,20</div>
<div class="t" style="right:327.05px;top:285.60px;height:15.25px;line-height:15.25px;font-size:9.8px;letter-spacing:0.45px;color:#222">0,00</div>
<div class="t" style="right:228.05px;top:285.60px;height:15.25px;line-height:15.25px;font-size:9.8px;letter-spacing:0.45px;color:#222">0,00</div>
<div class="t" style="right:180.05px;top:285.60px;height:15.25px;line-height:15.25px;font-size:9.8px;letter-spacing:0.45px;color:#222">0,00</div>
<div class="t" style="right:132.05px;top:285.60px;height:15.25px;line-height:15.25px;font-size:9.8px;letter-spacing:0.45px;color:#222">135,20</div>
<div class="t" style="right:1124.05px;top:301.85px;height:15.25px;line-height:15.25px;font-size:9.8px;letter-spacing:0.45px;color:#222">14</div>
<div class="t" style="left:53.3px;top:301.85px;height:15.25px;line-height:15.25px;font-size:9.8px;letter-spacing:0.28px;color:#222">Mr Chesnay</div>
<div class="t" style="left:178.3px;top:301.85px;height:15.25px;line-height:15.25px;font-size:9.8px;letter-spacing:0.45px;color:#222">02/02/2019</div>
<div class="t" style="left:239.3px;top:301.85px;height:15.25px;line-height:15.25px;font-size:9.8px;letter-spacing:0.45px;color:#222">02/02/2019</div>
<div class="t" style="left:300.3px;top:301.85px;height:15.25px;line-height:15.25px;font-size:9.8px;letter-spacing:0.28px;color:#222">Site WEB</div>
<div class="t" style="right:691.05px;top:301.85px;height:15.25px;line-height:15.25px;font-size:9.8px;letter-spacing:0.45px;color:#222">65,00</div>
<div class="t" style="right:514.05px;top:301.85px;height:15.25px;line-height:15.25px;font-size:9.8px;letter-spacing:0.45px;color:#222">0,00</div>
<div class="t" style="right:430.05px;top:301.85px;height:15.25px;line-height:15.25px;font-size:9.8px;letter-spacing:0.45px;color:#222">65,00</div>
<div class="t" style="right:327.05px;top:301.85px;height:15.25px;line-height:15.25px;font-size:9.8px;letter-spacing:0.45px;color:#222">0,00</div>
<div class="t" style="right:228.05px;top:301.85px;height:15.25px;line-height:15.25px;font-size:9.8px;letter-spacing:0.45px;color:#222">0,00</div>
<div class="t" style="right:180.05px;top:301.85px;height:15.25px;line-height:15.25px;font-size:9.8px;letter-spacing:0.45px;color:#222">0,00</div>
<div class="t" style="right:132.05px;top:301.85px;height:15.25px;line-height:15.25px;font-size:9.8px;letter-spacing:0.45px;color:#222">65,00</div>
<div class="t" style="right:1124.05px;top:318.10px;height:15.25px;line-height:15.25px;font-size:9.8px;letter-spacing:0.45px;color:#222">6</div>
<div class="t" style="left:53.3px;top:318.10px;height:15.25px;line-height:15.25px;font-size:9.8px;letter-spacing:0.28px;color:#222">Boris Asimov</div>
<div class="t" style="left:178.3px;top:318.10px;height:15.25px;line-height:15.25px;font-size:9.8px;letter-spacing:0.45px;color:#222">04/02/2019</div>
<div class="t" style="left:239.3px;top:318.10px;height:15.25px;line-height:15.25px;font-size:9.8px;letter-spacing:0.45px;color:#222">14/02/2019</div>
<div class="t" style="left:300.3px;top:318.10px;height:15.25px;line-height:15.25px;font-size:9.8px;letter-spacing:0.28px;color:#222">Site WEB</div>
<div class="t" style="right:691.05px;top:318.10px;height:15.25px;line-height:15.25px;font-size:9.8px;letter-spacing:0.45px;color:#222">743,60</div>
<div class="t" style="right:514.05px;top:318.10px;height:15.25px;line-height:15.25px;font-size:9.8px;letter-spacing:0.45px;color:#222">0,00</div>
<div class="t" style="right:430.05px;top:318.10px;height:15.25px;line-height:15.25px;font-size:9.8px;letter-spacing:0.45px;color:#222">743,60</div>
<div class="t" style="right:327.05px;top:318.10px;height:15.25px;line-height:15.25px;font-size:9.8px;letter-spacing:0.45px;color:#222">0,00</div>
<div class="t" style="right:228.05px;top:318.10px;height:15.25px;line-height:15.25px;font-size:9.8px;letter-spacing:0.45px;color:#222">0,00</div>
<div class="t" style="right:180.05px;top:318.10px;height:15.25px;line-height:15.25px;font-size:9.8px;letter-spacing:0.45px;color:#222">0,00</div>
<div class="t" style="right:132.05px;top:318.10px;height:15.25px;line-height:15.25px;font-size:9.8px;letter-spacing:0.45px;color:#222">743,60</div>
<div class="t" style="right:1124.05px;top:334.35px;height:15.25px;line-height:15.25px;font-size:9.8px;letter-spacing:0.45px;color:#222">15</div>
<div class="t" style="left:53.3px;top:334.35px;height:15.25px;line-height:15.25px;font-size:9.8px;letter-spacing:0.28px;color:#222">A. Goujon</div>
<div class="t" style="left:178.3px;top:334.35px;height:15.25px;line-height:15.25px;font-size:9.8px;letter-spacing:0.45px;color:#222">04/02/2019</div>
<div class="t" style="left:239.3px;top:334.35px;height:15.25px;line-height:15.25px;font-size:9.8px;letter-spacing:0.45px;color:#222">07/02/2019</div>
<div class="t" style="left:300.3px;top:334.35px;height:15.25px;line-height:15.25px;font-size:9.8px;letter-spacing:0.28px;color:#222">Site WEB</div>
<div class="t" style="right:691.05px;top:334.35px;height:15.25px;line-height:15.25px;font-size:9.8px;letter-spacing:0.45px;color:#222">260,00</div>
<div class="t" style="right:514.05px;top:334.35px;height:15.25px;line-height:15.25px;font-size:9.8px;letter-spacing:0.45px;color:#222">0,00</div>
<div class="t" style="right:430.05px;top:334.35px;height:15.25px;line-height:15.25px;font-size:9.8px;letter-spacing:0.45px;color:#222">260,00</div>
<div class="t" style="right:327.05px;top:334.35px;height:15.25px;line-height:15.25px;font-size:9.8px;letter-spacing:0.45px;color:#222">0,00</div>
<div class="t" style="right:228.05px;top:334.35px;height:15.25px;line-height:15.25px;font-size:9.8px;letter-spacing:0.45px;color:#222">0,00</div>
<div class="t" style="right:180.05px;top:334.35px;height:15.25px;line-height:15.25px;font-size:9.8px;letter-spacing:0.45px;color:#222">0,00</div>
<div class="t" style="right:132.05px;top:334.35px;height:15.25px;line-height:15.25px;font-size:9.8px;letter-spacing:0.45px;color:#222">260,00</div>
<div class="t" style="right:1124.05px;top:350.60px;height:15.25px;line-height:15.25px;font-size:9.8px;letter-spacing:0.45px;color:#222">19</div>
<div class="t" style="left:53.3px;top:350.60px;height:15.25px;line-height:15.25px;font-size:9.8px;letter-spacing:0.28px;color:#222">Aline Caline</div>
<div class="t" style="left:178.3px;top:350.60px;height:15.25px;line-height:15.25px;font-size:9.8px;letter-spacing:0.45px;color:#222">11/02/2019</div>
<div class="t" style="left:239.3px;top:350.60px;height:15.25px;line-height:15.25px;font-size:9.8px;letter-spacing:0.45px;color:#222">11/02/2019</div>
<div class="t" style="left:300.3px;top:350.60px;height:15.25px;line-height:15.25px;font-size:9.8px;letter-spacing:0.28px;color:#222">Site WEB</div>
<div class="t" style="right:691.05px;top:350.60px;height:15.25px;line-height:15.25px;font-size:9.8px;letter-spacing:0.45px;color:#222">65,00</div>
<div class="t" style="right:514.05px;top:350.60px;height:15.25px;line-height:15.25px;font-size:9.8px;letter-spacing:0.45px;color:#222">0,00</div>
<div class="t" style="right:430.05px;top:350.60px;height:15.25px;line-height:15.25px;font-size:9.8px;letter-spacing:0.45px;color:#222">65,00</div>
<div class="t" style="right:327.05px;top:350.60px;height:15.25px;line-height:15.25px;font-size:9.8px;letter-spacing:0.45px;color:#222">0,00</div>
<div class="t" style="right:228.05px;top:350.60px;height:15.25px;line-height:15.25px;font-size:9.8px;letter-spacing:0.45px;color:#222">0,00</div>
<div class="t" style="right:180.05px;top:350.60px;height:15.25px;line-height:15.25px;font-size:9.8px;letter-spacing:0.45px;color:#222">0,00</div>
<div class="t" style="right:132.05px;top:350.60px;height:15.25px;line-height:15.25px;font-size:9.8px;letter-spacing:0.45px;color:#222">65,00</div>
<div class="t" style="right:1124.05px;top:366.85px;height:15.25px;line-height:15.25px;font-size:9.8px;letter-spacing:0.45px;color:#222">10</div>
<div class="t" style="left:53.3px;top:366.85px;height:15.25px;line-height:15.25px;font-size:9.8px;letter-spacing:0.28px;color:#222">José Chalais</div>
<div class="t" style="left:178.3px;top:366.85px;height:15.25px;line-height:15.25px;font-size:9.8px;letter-spacing:0.45px;color:#222">26/02/2019</div>
<div class="t" style="left:239.3px;top:366.85px;height:15.25px;line-height:15.25px;font-size:9.8px;letter-spacing:0.45px;color:#222">27/02/2019</div>
<div class="t" style="left:300.3px;top:366.85px;height:15.25px;line-height:15.25px;font-size:9.8px;letter-spacing:0.28px;color:#222">Site WEB</div>
<div class="t" style="right:691.05px;top:366.85px;height:15.25px;line-height:15.25px;font-size:9.8px;letter-spacing:0.45px;color:#222">135,20</div>
<div class="t" style="right:514.05px;top:366.85px;height:15.25px;line-height:15.25px;font-size:9.8px;letter-spacing:0.45px;color:#222">0,00</div>
<div class="t" style="right:430.05px;top:366.85px;height:15.25px;line-height:15.25px;font-size:9.8px;letter-spacing:0.45px;color:#222">135,20</div>
<div class="t" style="right:327.05px;top:366.85px;height:15.25px;line-height:15.25px;font-size:9.8px;letter-spacing:0.45px;color:#222">50,00</div>
<div class="t" style="right:228.05px;top:366.85px;height:15.25px;line-height:15.25px;font-size:9.8px;letter-spacing:0.45px;color:#222">0,00</div>
<div class="t" style="right:180.05px;top:366.85px;height:15.25px;line-height:15.25px;font-size:9.8px;letter-spacing:0.45px;color:#222">50,00</div>
<div class="t" style="right:132.05px;top:366.85px;height:15.25px;line-height:15.25px;font-size:9.8px;letter-spacing:0.45px;color:#222">85,20</div>
<div class="t" style="right:1124.05px;top:383.10px;height:15.25px;line-height:15.25px;font-size:9.8px;letter-spacing:0.45px;color:#222">11</div>
<div class="t" style="left:53.3px;top:383.10px;height:15.25px;line-height:15.25px;font-size:9.8px;letter-spacing:0.28px;color:#222">Sonia Brasida</div>
<div class="t" style="left:178.3px;top:383.10px;height:15.25px;line-height:15.25px;font-size:9.8px;letter-spacing:0.45px;color:#222">27/02/2019</div>
<div class="t" style="left:239.3px;top:383.10px;height:15.25px;line-height:15.25px;font-size:9.8px;letter-spacing:0.45px;color:#222">06/03/2019</div>
<div class="t" style="left:300.3px;top:383.10px;height:15.25px;line-height:15.25px;font-size:9.8px;letter-spacing:0.28px;color:#222">AirBnB</div>
<div class="t" style="right:691.05px;top:383.10px;height:15.25px;line-height:15.25px;font-size:9.8px;letter-spacing:0.45px;color:#222">530,80</div>
<div class="t" style="right:514.05px;top:383.10px;height:15.25px;line-height:15.25px;font-size:9.8px;letter-spacing:0.45px;color:#222">0,00</div>
<div class="t" style="right:430.05px;top:383.10px;height:15.25px;line-height:15.25px;font-size:9.8px;letter-spacing:0.45px;color:#222">530,80</div>
<div class="t" style="right:327.05px;top:383.10px;height:15.25px;line-height:15.25px;font-size:9.8px;letter-spacing:0.45px;color:#222">0,00</div>
<div class="t" style="right:228.05px;top:383.10px;height:15.25px;line-height:15.25px;font-size:9.8px;letter-spacing:0.45px;color:#222">0,00</div>
<div class="t" style="right:180.05px;top:383.10px;height:15.25px;line-height:15.25px;font-size:9.8px;letter-spacing:0.45px;color:#222">0,00</div>
<div class="t" style="right:132.05px;top:383.10px;height:15.25px;line-height:15.25px;font-size:9.8px;letter-spacing:0.45px;color:#222">530,80</div>
<div class="t" style="right:1124.05px;top:399.35px;height:15.25px;line-height:15.25px;font-size:9.8px;letter-spacing:0.45px;color:#222">20</div>
<div class="t" style="left:53.3px;top:399.35px;height:15.25px;line-height:15.25px;font-size:9.8px;letter-spacing:0.28px;color:#222">Katia Machiavel</div>
<div class="t" style="left:178.3px;top:399.35px;height:15.25px;line-height:15.25px;font-size:9.8px;letter-spacing:0.45px;color:#222">06/03/2019</div>
<div class="t" style="left:239.3px;top:399.35px;height:15.25px;line-height:15.25px;font-size:9.8px;letter-spacing:0.45px;color:#222">13/03/2019</div>
<div class="t" style="left:300.3px;top:399.35px;height:15.25px;line-height:15.25px;font-size:9.8px;letter-spacing:0.28px;color:#222">Site WEB</div>
<div class="t" style="right:691.05px;top:399.35px;height:15.25px;line-height:15.25px;font-size:9.8px;letter-spacing:0.45px;color:#222">520,00</div>
<div class="t" style="right:514.05px;top:399.35px;height:15.25px;line-height:15.25px;font-size:9.8px;letter-spacing:0.45px;color:#222">0,00</div>
<div class="t" style="right:430.05px;top:399.35px;height:15.25px;line-height:15.25px;font-size:9.8px;letter-spacing:0.45px;color:#222">520,00</div>
<div class="t" style="right:327.05px;top:399.35px;height:15.25px;line-height:15.25px;font-size:9.8px;letter-spacing:0.45px;color:#222">0,00</div>
<div class="t" style="right:228.05px;top:399.35px;height:15.25px;line-height:15.25px;font-size:9.8px;letter-spacing:0.45px;color:#222">0,00</div>
<div class="t" style="right:180.05px;top:399.35px;height:15.25px;line-height:15.25px;font-size:9.8px;letter-spacing:0.45px;color:#222">0,00</div>
<div class="t" style="right:132.05px;top:399.35px;height:15.25px;line-height:15.25px;font-size:9.8px;letter-spacing:0.45px;color:#222">520,00</div>
<div class="t" style="right:1124.05px;top:415.60px;height:15.25px;line-height:15.25px;font-size:9.8px;letter-spacing:0.45px;color:#222">12</div>
<div class="t" style="left:53.3px;top:415.60px;height:15.25px;line-height:15.25px;font-size:9.8px;letter-spacing:0.28px;color:#222">Marie Dubois</div>
<div class="t" style="left:178.3px;top:415.60px;height:15.25px;line-height:15.25px;font-size:9.8px;letter-spacing:0.45px;color:#222">16/03/2019</div>
<div class="t" style="left:239.3px;top:415.60px;height:15.25px;line-height:15.25px;font-size:9.8px;letter-spacing:0.45px;color:#222">23/03/2019</div>
<div class="t" style="left:300.3px;top:415.60px;height:15.25px;line-height:15.25px;font-size:9.8px;letter-spacing:0.28px;color:#222">Site WEB</div>
<div class="t" style="right:691.05px;top:415.60px;height:15.25px;line-height:15.25px;font-size:9.8px;letter-spacing:0.45px;color:#222">540,80</div>
<div class="t" style="right:514.05px;top:415.60px;height:15.25px;line-height:15.25px;font-size:9.8px;letter-spacing:0.45px;color:#222">0,00</div>
<div class="t" style="right:430.05px;top:415.60px;height:15.25px;line-height:15.25px;font-size:9.8px;letter-spacing:0.45px;color:#222">540,80</div>
<div class="t" style="right:327.05px;top:415.60px;height:15.25px;line-height:15.25px;font-size:9.8px;letter-spacing:0.45px;color:#222">100,00</div>
<div class="t" style="right:228.05px;top:415.60px;height:15.25px;line-height:15.25px;font-size:9.8px;letter-spacing:0.45px;color:#222">0,00</div>
<div class="t" style="right:180.05px;top:415.60px;height:15.25px;line-height:15.25px;font-size:9.8px;letter-spacing:0.45px;color:#222">100,00</div>
<div class="t" style="right:132.05px;top:415.60px;height:15.25px;line-height:15.25px;font-size:9.8px;letter-spacing:0.45px;color:#222">440,80</div>
<div class="t" style="right:1124.05px;top:431.85px;height:15.25px;line-height:15.25px;font-size:9.8px;letter-spacing:0.45px;color:#222">16</div>
<div class="t" style="left:53.3px;top:431.85px;height:15.25px;line-height:15.25px;font-size:9.8px;letter-spacing:0.28px;color:#222">Isidore Ducasse</div>
<div class="t" style="left:178.3px;top:431.85px;height:15.25px;line-height:15.25px;font-size:9.8px;letter-spacing:0.45px;color:#222">16/03/2019</div>
<div class="t" style="left:239.3px;top:431.85px;height:15.25px;line-height:15.25px;font-size:9.8px;letter-spacing:0.45px;color:#222">20/03/2019</div>
<div class="t" style="left:300.3px;top:431.85px;height:15.25px;line-height:15.25px;font-size:9.8px;letter-spacing:0.28px;color:#222">Site WEB</div>
<div class="t" style="right:691.05px;top:431.85px;height:15.25px;line-height:15.25px;font-size:9.8px;letter-spacing:0.45px;color:#222">338,00</div>
<div class="t" style="right:514.05px;top:431.85px;height:15.25px;line-height:15.25px;font-size:9.8px;letter-spacing:0.45px;color:#222">0,00</div>
<div class="t" style="right:430.05px;top:431.85px;height:15.25px;line-height:15.25px;font-size:9.8px;letter-spacing:0.45px;color:#222">338,00</div>
<div class="t" style="right:327.05px;top:431.85px;height:15.25px;line-height:15.25px;font-size:9.8px;letter-spacing:0.45px;color:#222">0,00</div>
<div class="t" style="right:228.05px;top:431.85px;height:15.25px;line-height:15.25px;font-size:9.8px;letter-spacing:0.45px;color:#222">0,00</div>
<div class="t" style="right:180.05px;top:431.85px;height:15.25px;line-height:15.25px;font-size:9.8px;letter-spacing:0.45px;color:#222">0,00</div>
<div class="t" style="right:132.05px;top:431.85px;height:15.25px;line-height:15.25px;font-size:9.8px;letter-spacing:0.45px;color:#222">338,00</div>
<div class="t" style="right:1124.05px;top:448.10px;height:15.25px;line-height:15.25px;font-size:9.8px;letter-spacing:0.45px;color:#222">4</div>
<div class="t" style="left:53.3px;top:448.10px;height:15.25px;line-height:15.25px;font-size:9.8px;letter-spacing:0.28px;color:#222">Famille Galtier</div>
<div class="t" style="left:178.3px;top:448.10px;height:15.25px;line-height:15.25px;font-size:9.8px;letter-spacing:0.45px;color:#222">22/03/2019</div>
<div class="t" style="left:239.3px;top:448.10px;height:15.25px;line-height:15.25px;font-size:9.8px;letter-spacing:0.45px;color:#222">29/03/2019</div>
<div class="t" style="left:300.3px;top:448.10px;height:15.25px;line-height:15.25px;font-size:9.8px;letter-spacing:0.28px;color:#222">Bouche à Oreille</div>
<div class="t" style="right:691.05px;top:448.10px;height:15.25px;line-height:15.25px;font-size:9.8px;letter-spacing:0.45px;color:#222">540,80</div>
<div class="t" style="right:514.05px;top:448.10px;height:15.25px;line-height:15.25px;font-size:9.8px;letter-spacing:0.45px;color:#222">0,00</div>
<div class="t" style="right:430.05px;top:448.10px;height:15.25px;line-height:15.25px;font-size:9.8px;letter-spacing:0.45px;color:#222">540,80</div>
<div class="t" style="right:327.05px;top:448.10px;height:15.25px;line-height:15.25px;font-size:9.8px;letter-spacing:0.45px;color:#222">540,80</div>
<div class="t" style="right:228.05px;top:448.10px;height:15.25px;line-height:15.25px;font-size:9.8px;letter-spacing:0.45px;color:#222">0,00</div>
<div class="t" style="right:180.05px;top:448.10px;height:15.25px;line-height:15.25px;font-size:9.8px;letter-spacing:0.45px;color:#222">540,80</div>
<div class="t" style="right:132.05px;top:448.10px;height:15.25px;line-height:15.25px;font-size:9.8px;letter-spacing:0.45px;color:#222">0,00</div>
<div class="t" style="right:1124.05px;top:464.35px;height:15.25px;line-height:15.25px;font-size:9.8px;letter-spacing:0.45px;color:#222">13</div>
<div class="t" style="left:53.3px;top:464.35px;height:15.25px;line-height:15.25px;font-size:9.8px;letter-spacing:0.28px;color:#222">Florence et Damien Allais</div>
<div class="t" style="left:178.3px;top:464.35px;height:15.25px;line-height:15.25px;font-size:9.8px;letter-spacing:0.45px;color:#222">27/03/2019</div>
<div class="t" style="left:239.3px;top:464.35px;height:15.25px;line-height:15.25px;font-size:9.8px;letter-spacing:0.45px;color:#222">28/03/2019</div>
<div class="t" style="left:300.3px;top:464.35px;height:15.25px;line-height:15.25px;font-size:9.8px;letter-spacing:0.28px;color:#222">Site WEB</div>
<div class="t" style="right:691.05px;top:464.35px;height:15.25px;line-height:15.25px;font-size:9.8px;letter-spacing:0.45px;color:#222">135,20</div>
<div class="t" style="right:514.05px;top:464.35px;height:15.25px;line-height:15.25px;font-size:9.8px;letter-spacing:0.45px;color:#222">0,00</div>
<div class="t" style="right:430.05px;top:464.35px;height:15.25px;line-height:15.25px;font-size:9.8px;letter-spacing:0.45px;color:#222">135,20</div>
<div class="t" style="right:327.05px;top:464.35px;height:15.25px;line-height:15.25px;font-size:9.8px;letter-spacing:0.45px;color:#222">50,00</div>
<div class="t" style="right:228.05px;top:464.35px;height:15.25px;line-height:15.25px;font-size:9.8px;letter-spacing:0.45px;color:#222">0,00</div>
<div class="t" style="right:180.05px;top:464.35px;height:15.25px;line-height:15.25px;font-size:9.8px;letter-spacing:0.45px;color:#222">50,00</div>
<div class="t" style="right:132.05px;top:464.35px;height:15.25px;line-height:15.25px;font-size:9.8px;letter-spacing:0.45px;color:#222">85,20</div>
<div class="t" style="right:1124.05px;top:480.60px;height:15.25px;line-height:15.25px;font-size:9.8px;letter-spacing:0.45px;color:#222">17</div>
<div class="t" style="left:53.3px;top:480.60px;height:15.25px;line-height:15.25px;font-size:9.8px;letter-spacing:0.28px;color:#222">Philibert Sandre</div>
<div class="t" style="left:178.3px;top:480.60px;height:15.25px;line-height:15.25px;font-size:9.8px;letter-spacing:0.45px;color:#222">04/04/2019</div>
<div class="t" style="left:239.3px;top:480.60px;height:15.25px;line-height:15.25px;font-size:9.8px;letter-spacing:0.45px;color:#222">06/04/2019</div>
<div class="t" style="left:300.3px;top:480.60px;height:15.25px;line-height:15.25px;font-size:9.8px;letter-spacing:0.28px;color:#222">Site WEB</div>
<div class="t" style="right:691.05px;top:480.60px;height:15.25px;line-height:15.25px;font-size:9.8px;letter-spacing:0.45px;color:#222">202,80</div>
<div class="t" style="right:514.05px;top:480.60px;height:15.25px;line-height:15.25px;font-size:9.8px;letter-spacing:0.45px;color:#222">0,00</div>
<div class="t" style="right:430.05px;top:480.60px;height:15.25px;line-height:15.25px;font-size:9.8px;letter-spacing:0.45px;color:#222">202,80</div>
<div class="t" style="right:327.05px;top:480.60px;height:15.25px;line-height:15.25px;font-size:9.8px;letter-spacing:0.45px;color:#222">50,00</div>
<div class="t" style="right:228.05px;top:480.60px;height:15.25px;line-height:15.25px;font-size:9.8px;letter-spacing:0.45px;color:#222">0,00</div>
<div class="t" style="right:180.05px;top:480.60px;height:15.25px;line-height:15.25px;font-size:9.8px;letter-spacing:0.45px;color:#222">50,00</div>
<div class="t" style="right:132.05px;top:480.60px;height:15.25px;line-height:15.25px;font-size:9.8px;letter-spacing:0.45px;color:#222">152,80</div>
<div class="t" style="right:1124.05px;top:496.85px;height:15.25px;line-height:15.25px;font-size:9.8px;letter-spacing:0.45px;color:#222">21</div>
<div class="t" style="left:53.3px;top:496.85px;height:15.25px;line-height:15.25px;font-size:9.8px;letter-spacing:0.28px;color:#222">Mr &amp; Mme Léglantier</div>
<div class="t" style="left:178.3px;top:496.85px;height:15.25px;line-height:15.25px;font-size:9.8px;letter-spacing:0.45px;color:#222">22/04/2019</div>
<div class="t" style="left:239.3px;top:496.85px;height:15.25px;line-height:15.25px;font-size:9.8px;letter-spacing:0.45px;color:#222">28/04/2019</div>
<div class="t" style="left:300.3px;top:496.85px;height:15.25px;line-height:15.25px;font-size:9.8px;letter-spacing:0.28px;color:#222">Site WEB</div>
<div class="t" style="right:691.05px;top:496.85px;height:15.25px;line-height:15.25px;font-size:9.8px;letter-spacing:0.45px;color:#222">473,20</div>
<div class="t" style="right:514.05px;top:496.85px;height:15.25px;line-height:15.25px;font-size:9.8px;letter-spacing:0.45px;color:#222">0,00</div>
<div class="t" style="right:430.05px;top:496.85px;height:15.25px;line-height:15.25px;font-size:9.8px;letter-spacing:0.45px;color:#222">473,20</div>
<div class="t" style="right:327.05px;top:496.85px;height:15.25px;line-height:15.25px;font-size:9.8px;letter-spacing:0.45px;color:#222">100,00</div>
<div class="t" style="right:228.05px;top:496.85px;height:15.25px;line-height:15.25px;font-size:9.8px;letter-spacing:0.45px;color:#222">0,00</div>
<div class="t" style="right:180.05px;top:496.85px;height:15.25px;line-height:15.25px;font-size:9.8px;letter-spacing:0.45px;color:#222">100,00</div>
<div class="t" style="right:132.05px;top:496.85px;height:15.25px;line-height:15.25px;font-size:9.8px;letter-spacing:0.45px;color:#222">373,20</div>
<div class="t" style="right:1124.22px;top:512.80px;height:15px;line-height:15px;font-size:9.8px;letter-spacing:0.28px;color:#222">totaux</div>
<div class="t" style="left:300.3px;top:512.80px;height:15px;line-height:15px;font-size:9.8px;letter-spacing:0.45px;color:#222">20</div>
<div class="t" style="right:691.05px;top:512.80px;height:15px;line-height:15px;font-size:9.8px;letter-spacing:0.45px;color:#222">6 534,44</div>
<div class="t" style="right:514.05px;top:512.80px;height:15px;line-height:15px;font-size:9.8px;letter-spacing:0.45px;color:#222">435,44</div>
<div class="t" style="right:430.05px;top:512.80px;height:15px;line-height:15px;font-size:9.8px;letter-spacing:0.45px;color:#222">6 099,00</div>
<div class="t" style="right:327.05px;top:512.80px;height:15px;line-height:15px;font-size:9.8px;letter-spacing:0.45px;color:#222">890,80</div>
<div class="t" style="right:228.05px;top:512.80px;height:15px;line-height:15px;font-size:9.8px;letter-spacing:0.45px;color:#222">435,44</div>
<div class="t" style="right:180.05px;top:512.80px;height:15px;line-height:15px;font-size:9.8px;letter-spacing:0.45px;color:#222">1 326,24</div>
<div class="t" style="right:132.05px;top:512.80px;height:15px;line-height:15px;font-size:9.8px;letter-spacing:0.45px;color:#222">5 208,20</div>
</body></html>
